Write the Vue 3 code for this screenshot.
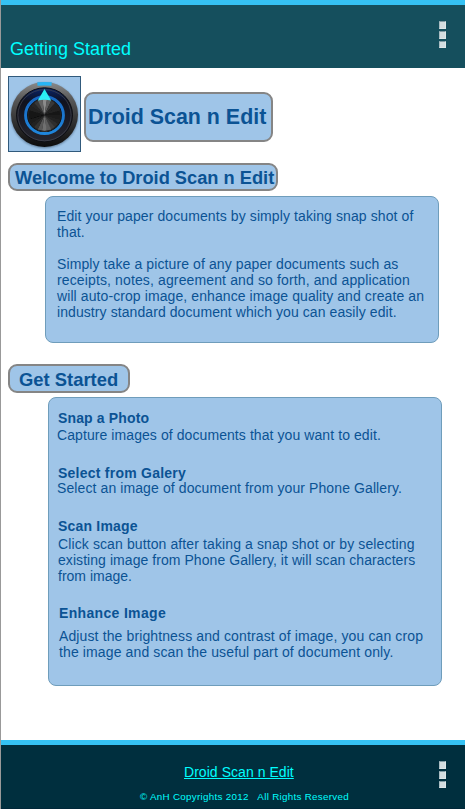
<script setup>
const intro = [
  { text: 'Edit your paper documents by simply taking snap shot of', ls: 0.1 },
  { text: 'that.', ls: 0.1 },
  { text: '', ls: 0 },
  { text: 'Simply take a picture of any paper documents such as', ls: 0.1 },
  { text: 'receipts, notes, agreement and so forth, and application', ls: 0.13 },
  { text: 'will auto-crop image, enhance image quality and create an', ls: 0.09 },
  { text: 'industry standard document which you can easily edit.', ls: 0.08 },
]
const steps = [
  { id: 'snap', title: 'Snap a Photo', ls: 0.14, lines: [{ text: 'Capture images of documents that you want to edit.', ls: 0.08 }] },
  { id: 'select', title: 'Select from Galery', ls: 0.24, lines: [{ text: 'Select an image of document from your Phone Gallery.', ls: 0.1 }] },
  {
    id: 'scan',
    title: 'Scan Image',
    ls: 0.2,
    lines: [
      { text: 'Click scan button after taking a snap shot or by selecting', ls: 0.11 },
      { text: 'existing image from Phone Gallery, it will scan characters', ls: 0.06 },
      { text: 'from image.', ls: 0 },
    ],
  },
  {
    id: 'enhance',
    title: 'Enhance Image',
    ls: 0.33,
    lines: [
      { text: 'Adjust the brightness and contrast of image, you can crop', ls: 0.12 },
      { text: 'the image and scan the useful part of document only.', ls: 0.12 },
    ],
  },
]
// wedges of the brushed-metal knob, clockwise from the top
const shades = [140, 95, 55, 35, 35, 24, 30, 35, 45, 62, 92, 112, 88, 50, 35, 28, 18, 22, 34, 38, 55, 98]
const wedges = shades.map((v, i) => {
  const step = (Math.PI * 2) / shades.length
  const a = i * step - Math.PI / 2 - step / 2
  const b = a + step * 1.08
  const p = (t) => `${(36.5 + 16.6 * Math.cos(t)).toFixed(2)} ${(39 + 16.6 * Math.sin(t)).toFixed(2)}`
  return { d: `M36.5 39L${p(a)}A16.6 16.6 0 0 1 ${p(b)}Z`, fill: `rgb(${v},${v},${v})` }
})
</script>

<template>
  <div class="screen">
    <header class="topbar">
      <h1 class="page-title">Getting Started</h1>
      <div class="menu"><i></i><i></i><i></i></div>
    </header>

    <main class="content">
      <div class="brand">
        <svg class="logo" width="73" height="76" viewBox="0 0 73 76">
          <defs>
            <linearGradient id="rim" x1="0" y1="0" x2="0" y2="1">
              <stop offset="0" stop-color="#8b8b8b" />
              <stop offset=".25" stop-color="#5a5a5a" />
              <stop offset=".6" stop-color="#333" />
              <stop offset="1" stop-color="#0c0c0c" />
            </linearGradient>
            <linearGradient id="well" x1="0" y1="0" x2="0" y2="1">
              <stop offset="0" stop-color="#07246c" />
              <stop offset=".25" stop-color="#10121e" />
              <stop offset="1" stop-color="#26262f" />
            </linearGradient>
            <linearGradient id="ring" x1="0" y1="0" x2="0" y2="1">
              <stop offset="0" stop-color="#1767c2" />
              <stop offset="1" stop-color="#1f86dc" />
            </linearGradient>
            <linearGradient id="tip" x1="0" y1="0" x2="0" y2="1">
              <stop offset="0" stop-color="#1ff3ee" />
              <stop offset="1" stop-color="#35eef8" />
            </linearGradient>
            <filter id="soft" x="-20%" y="-20%" width="140%" height="140%"><feGaussianBlur stdDeviation=".9" /></filter>
            <filter id="knob"><feGaussianBlur stdDeviation=".7" /></filter>
          </defs>
          <rect x=".5" y=".5" width="72" height="75" fill="#9fc5e8" stroke="#315a7c" />
          <ellipse cx="36.5" cy="39.5" rx="33.5" ry="32.5" fill="#1b2b3b" opacity=".5" filter="url(#soft)" />
          <ellipse cx="36.5" cy="38.5" rx="33.5" ry="32.5" fill="url(#rim)" />
          <ellipse cx="36.5" cy="38.8" rx="28" ry="27" fill="url(#well)" stroke="#0d0e13" />
          <ellipse cx="36.5" cy="39.2" rx="26.6" ry="25.6" fill="none" stroke="#45464f" stroke-width=".7" />
          <path d="M29.3 6.3Q36.5 5.6 43.7 6.3L43.5 9.8Q36.5 9.4 29.5 9.8Z" fill="#27b4f6" />
          <ellipse cx="36.5" cy="39.2" rx="18.9" ry="18.4" fill="#08090c" stroke="url(#ring)" stroke-width="3" />
          <g filter="url(#knob)"><path v-for="(w, i) in wedges" :key="i" :d="w.d" :fill="w.fill" /></g>
          <circle cx="36.5" cy="39" r="16.4" fill="none" stroke="#222" stroke-width="1" />
          <path d="M36.5 13L43.2 24.6Q36.5 22.9 29.8 24.6Z" fill="url(#tip)" />
        </svg>
        <h2 class="badge brand-name">Droid Scan n Edit</h2>
      </div>

      <h3 class="badge welcome">Welcome to Droid Scan n Edit</h3>
      <section class="panel intro">
        <div v-for="(l, i) in intro" :key="i" class="line" :style="{ letterSpacing: l.ls + 'px' }">{{ l.text }}</div>
      </section>

      <h3 class="badge start">Get Started</h3>
      <section class="panel steps">
        <article v-for="s in steps" :key="s.id" :class="['step', s.id]">
          <h4 :style="{ letterSpacing: s.ls + 'px' }">{{ s.title }}</h4>
          <div v-for="l in s.lines" :key="l.text" class="line" :style="{ letterSpacing: l.ls + 'px' }">{{ l.text }}</div>
        </article>
      </section>
    </main>

    <footer class="bottombar">
      <div class="foot-text">
        <a class="link">Droid Scan n Edit</a>
        <div class="copy"><span>© AnH Copyrights 2012</span><span>All Rights Reserved</span></div>
      </div>
      <div class="menu"><i></i><i></i><i></i></div>
    </footer>
  </div>
</template>

<style>
body { background: #fff; }
</style>

<style scoped>
.screen {
  box-sizing: border-box;
  width: 465px;
  height: 809px;
  border-left: 1px solid #999;
  display: flex;
  flex-direction: column;
  overflow: hidden;
  background: #fff;
  font-family: "Liberation Sans", Arial, sans-serif;
  color: #0b5394;
}
h1, h2, h3, h4 { margin: 0; }
.topbar {
  box-sizing: border-box;
  height: 68px;
  flex: none;
  border-top: 5px solid #35c2f4;
  background: #154f5d;
  display: flex;
  justify-content: space-between;
  padding: 16px 19px 0 9px;
}
.page-title {
  font-size: 18px;
  font-weight: 400;
  line-height: 20px;
  color: #00ffff;
  padding-top: 18px;
  white-space: nowrap;
}
.menu { display: flex; flex-direction: column; gap: 2px; width: 7px; flex: none; }
.menu i {
  box-sizing: border-box;
  width: 7px;
  height: 8px;
  background: #d3dde0;
  border: 1px solid #dfe7e9;
  border-left-color: #a9bcc2;
  border-top-color: #7f9aa2;
}
.menu i:last-child { height: 7px; }
.content { flex: 1; display: flex; flex-direction: column; align-items: flex-start; padding: 8px 0 0 7px; }
.brand { display: flex; gap: 3px; height: 76px; }
.logo { display: block; flex: none; }
.badge {
  box-sizing: border-box;
  background: #9fc5e8;
  border: 2px solid #858585;
  border-radius: 9px;
  white-space: nowrap;
  font-weight: 700;
}
.brand-name { width: 189px; height: 50px; margin-top: 16px; padding-left: 2px; font-size: 21.4px; line-height: 47px; }
.welcome { width: 270px; height: 28px; margin-top: 11px; padding-left: 5px; font-size: 18.25px; line-height: 26px; }
.start { width: 122px; height: 29px; margin-top: 21px; padding-left: 9px; font-size: 18.4px; line-height: 27px; }
.panel {
  box-sizing: border-box;
  width: 394px;
  background: #9fc5e8;
  border: 1px solid #6f9dbb;
  border-radius: 8px;
  font-size: 14px;
}
.line { height: 16px; line-height: 16px; white-space: nowrap; }
.intro { height: 147px; margin: 5px 0 0 37px; padding: 11px 0 0 11px; }
.steps { height: 289px; margin: 4px 0 0 40px; padding: 12px 0 0 8px; }
h4 { font-size: 14px; line-height: 17px; height: 17px; padding-left: 1px; white-space: nowrap; }
.select { margin-top: 22px; }
.select h4 { height: 15px; }
.scan { margin-top: 22px; padding-left: 1px; }
.scan h4 { padding-left: 0; height: 18px; }
.enhance { margin-top: 21px; padding-left: 2px; }
.enhance h4 { padding-left: 0; height: 23px; }
.bottombar {
  box-sizing: border-box;
  height: 69px;
  flex: none;
  border-top: 5px solid #35c2f4;
  border-bottom: 1px solid #00283a;
  background: #002f3e;
  display: flex;
  justify-content: space-between;
  padding: 16px 19px 0 139px;
  color: #00ffff;
}
.foot-text { display: flex; flex-direction: column; padding-top: 3px; }
.link { align-self: flex-start; margin-left: 44px; font-size: 14px; letter-spacing: .05px; line-height: 16px; text-decoration: underline; white-space: nowrap; }
.copy { display: flex; gap: 8.5px; font-size: 9.8px; letter-spacing: .3px; line-height: 12px; margin-top: 11px; white-space: nowrap; }
</style>
